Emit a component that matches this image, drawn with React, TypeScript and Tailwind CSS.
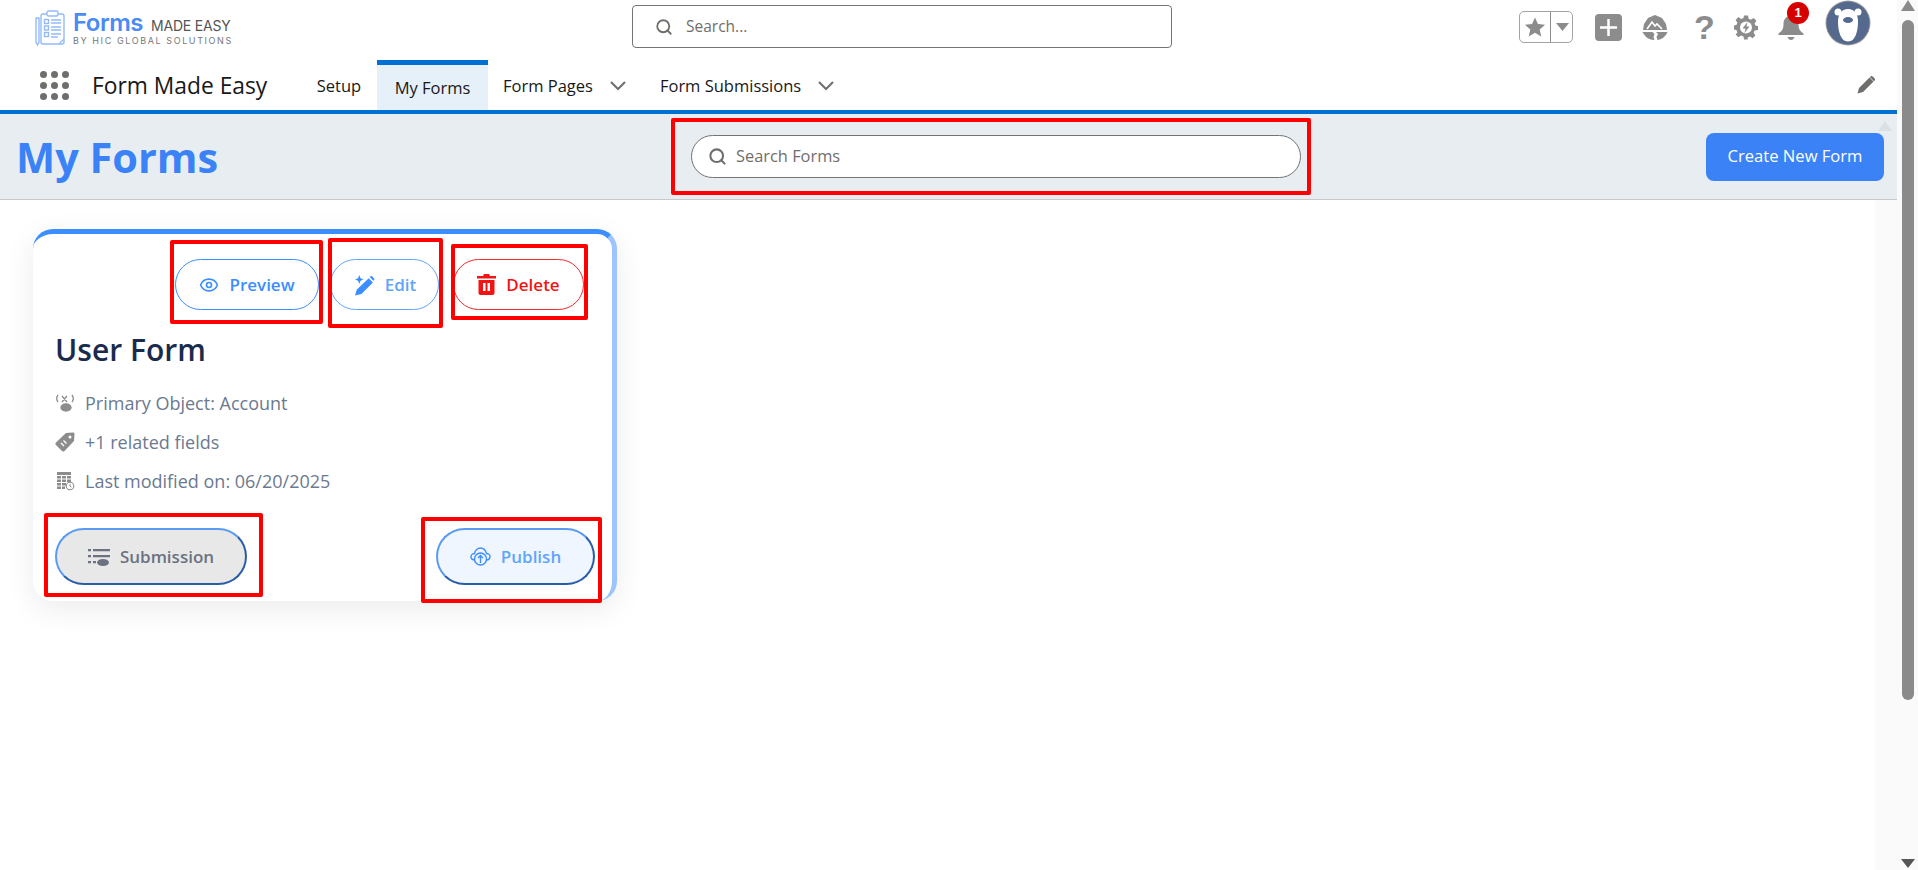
import React from "react";
import { Search, Eye } from "lucide-react";

const FONT = "font-['Open_Sans','Noto_Sans',sans-serif]";

function AppLogo() {
  return (
    <div className="flex items-center ml-[35px] w-[197px] mb-[4px]" data-name="Logo">
      <svg className="shrink-0" width="30" height="37" viewBox="0 0 30 37" fill="none" stroke="#93bbfb" strokeWidth="1.4">
        <rect x="6" y="4" width="23" height="30" rx="2" />
        <rect x="12" y="1" width="11" height="5" rx="1.5" fill="#fff" />
        <path d="M1 8h3v24l-1.500 3L1 32z" />
        <rect x="9.500" y="9.500" width="4" height="4" />
        <rect x="9.500" y="16" width="4" height="4" />
        <rect x="9.500" y="22.500" width="4" height="4" />
        <path d="M16 10h10M16 13h10M16 17h10M16 20h10M16 24h10M16 27h7M24 34l5-5" />
      </svg>
      <div className="ml-[8px] font-['Inter',sans-serif] leading-none">
        <div className="flex items-baseline">
          <span className="text-[24px] font-semibold text-[#4a8bf5] tracking-[-0.5px]">Forms</span>
          <span className="ml-[8px] text-[14px] text-[#555] tracking-[-0.2px] whitespace-nowrap">MADE EASY</span>
        </div>
        <div className="mt-[1px] text-[9px] text-[#777] tracking-[1.6px] whitespace-nowrap">BY HIC GLOBAL SOLUTIONS</div>
      </div>
    </div>
  );
}

function TopIcons() {
  return (
    <div className="flex items-center ml-auto mr-[26px] mb-[6px] text-[#8c8c8c]">
      <div className="flex items-center h-[32px] w-[54px] border border-[#a3a3a3] rounded-[5px]">
        <div className="flex items-center justify-center w-[31px] h-full border-r border-[#8c8c8c]">
          <svg width="22" height="22" viewBox="0 0 24 24" fill="#8c8c8c"><path d="M12 1.500l3.200 7.200 7.800.8-5.900 5.200 1.800 7.700L12 18.400l-6.900 4 1.800-7.700L1 9.500l7.800-.8z" /></svg>
        </div>
        <svg className="ml-[5px]" width="13" height="8" viewBox="0 0 13 8" fill="#8c8c8c"><path d="M0 0h13L6.500 8z" /></svg>
      </div>

      <div className="flex items-center justify-center ml-[22px] w-[27px] h-[27px] rounded-[4px] bg-[#8c8c8c]">
        <svg width="19" height="19" viewBox="0 0 19 19" stroke="#fff" strokeWidth="2.500"><path d="M9.500 1v17M1 9.500h17" /></svg>
      </div>

      {/* trailhead */}
      <svg className="ml-[20px]" width="26" height="25" viewBox="0 0 26 25" fill="#8c8c8c">
        <path d="M13 0l7 3 4 6 1 6H1l1-6 4-6z" />
        <path d="M0.500 17h10l2 2-1 3 1 3C7 25 3 22 .5 17zM14 17h11.500c-2 5-6 7.500-10 8l-1-3 1.500-3z" />
        <path d="M5 14l5-7 3 4 2-2 5 5" fill="none" stroke="#fff" strokeWidth="1.600" />
      </svg>

      <span className="ml-[26px] w-[18px] text-[34px] leading-none font-semibold text-[#8c8c8c] font-['Liberation_Sans',sans-serif]">?</span>

      {/* setup gear with bolt */}
      <svg className="ml-[22px]" width="24" height="25" viewBox="0 0 24 24">
        <path fill="#8c8c8c" d="M10 0h4l.6 3.200 2.300 1 2.700-1.800 2.800 2.800-1.800 2.700 1 2.300L24 10.600v3.800l-3.400.6-1 2.300 1.800 2.700-2.800 2.800-2.700-1.800-2.300 1L13.900 24h-3.800l-.6-3-2.400-1-2.700 1.800-2.800-2.800L3.400 17l-1-2.400L0 14v-4l2.400-.4 1-2.400L1.600 4.400l2.800-2.800 2.700 1.800 2.400-1z" />
        <circle cx="12" cy="12" r="6" fill="#fff" />
        <path fill="#8c8c8c" d="M13.500 6.500L8.500 13h3l-1 4.500 5-6.500h-3z" />
      </svg>

      {/* bell */}
      <div className="relative ml-[20px] w-[26px] h-[25px]">
        <svg width="26" height="25" viewBox="0 0 26 25" fill="#8c8c8c">
          <path d="M13 1c5 0 7.500 3.500 7.500 8 0 5 1.500 7 5 9.500V20H.5v-1.500c3.500-2.500 5-4.500 5-9.500 0-4.500 2.500-8 7.500-8z" />
          <path d="M9.500 22h7c-.5 2-2 3-3.500 3s-3-1-3.500-3z" />
        </svg>
        <span className="absolute left-[9px] top-[-13px] flex items-center justify-center w-[22px] h-[22px] rounded-full bg-[#d60000] text-white text-[13px] font-bold font-['Liberation_Sans',sans-serif]">1</span>
      </div>

      {/* avatar */}
      <svg className="ml-[21px] mb-[8px]" width="46" height="46" viewBox="0 0 46 46">
        <circle cx="23" cy="23" r="22.500" fill="#9b9b9b" />
        <circle cx="23" cy="23" r="21.500" fill="#54698d" />
        <circle cx="13" cy="12" r="3.500" fill="#fff" />
        <circle cx="33" cy="12" r="3.500" fill="#fff" />
        <path d="M23 9c6.500 0 10 5 10 12.500 0 9-2.500 20-10 20s-10-11-10-20C13 14 16.500 9 23 9z" fill="#fff" />
        <ellipse cx="23" cy="20" rx="5" ry="3" fill="#54698d" />
      </svg>
    </div>
  );
}

function HeaderBar() {
  return (
    <div className="flex items-center h-[60px] bg-white shrink-0" data-name="Global header">
      <AppLogo />
      <div className="flex items-center h-[43px] w-[540px] ml-[400px] mb-[7px] px-[22px] border border-[#747474] rounded-[4px] bg-white text-[#706e6b]">
        <Search size={18} strokeWidth={2.4} />
        <span className="ml-[13px] text-[15.500px]">Search...</span>
      </div>
      <TopIcons />
    </div>
  );
}

function NavChevron() {
  return (
    <svg width="16" height="10" viewBox="0 0 16 10" fill="none" stroke="#706e6b" strokeWidth="2">
      <path d="M1 1l7 7 7-7" />
    </svg>
  );
}

function NavBar() {
  return (
    <div className="flex items-center h-[50px] bg-white shrink-0" data-name="Nav">
      <div className="ml-[40px] grid grid-cols-3 gap-[4px] w-[29px]">
        {[...Array(9).keys()].map((i) => (
          <span key={i} className="w-[7px] h-[7px] rounded-full bg-[#706e6b]" />
        ))}
      </div>
      <span className="ml-[23px] mt-[3px] w-[209px] text-[22.800px] text-[#181818] whitespace-nowrap">Form Made Easy</span>
      <span className="w-[76px] mt-[2px] text-center text-[16.500px] text-[#181818]">Setup</span>
      <div className="flex items-center justify-center w-[111px] h-full pt-[1px] bg-[#e6f0f9] border-t-[5px] border-[#0070d2] text-[16.500px] text-[#181818]">My Forms</div>
      <div className="flex items-center ml-[15px] mt-[2px] text-[16.500px] text-[#181818]">
        <span>Form Pages</span>
        <span className="ml-[17px]"><NavChevron /></span>
      </div>
      <div className="flex items-center ml-[34px] mt-[2px] text-[16.500px] text-[#181818]">
        <span>Form Submissions</span>
        <span className="ml-[17px]"><NavChevron /></span>
      </div>
      <svg className="ml-auto mr-[22px]" width="18" height="18" viewBox="0 0 18 18" fill="#706e6b">
        <path d="M12.500 1.500l4 4L6 16l-5.500 1.500L2 12zM13.500.5c.8-.7 1.500-.7 2.200 0l2 2c.6.700.6 1.400 0 2l-.7.700-4-4z" />
      </svg>
    </div>
  );
}

function PageHeader() {
  return (
    <div className="relative flex items-center h-[86px] bg-[#e8edf2] border-b border-[#c9c9c9] shrink-0" data-name="Page header">
      <h1 className="w-[691px] pl-[16px] pt-[2px] text-[41.500px] font-bold leading-none text-[#3b82f6]">My Forms</h1>
      <div className="relative flex items-center h-[43px] w-[610px] px-[16px] rounded-full border border-[#747474] bg-white text-[#706e6b]">
        <Search size={19} strokeWidth={2.6} />
        <span className="ml-[9px] text-[16.400px]">Search Forms</span>
        <span className="absolute left-[-21px] right-[-11px] top-[-18px] bottom-[-18px] border-[4px] border-[#ff0000] rounded-[2px]" />
      </div>
      <button className="ml-auto mr-[13px] w-[178px] h-[48px] rounded-[8px] bg-[#3b82f6] text-white text-[16.600px]">Create New Form</button>
      <svg className="absolute right-[5px] top-[7px]" width="14" height="10" viewBox="0 0 14 10" fill="#dbe0e5"><path d="M7 0l7 10H0z" /></svg>
    </div>
  );
}

function PillButton({
  className,
  icon,
  label,
  box,
}: {
  className: string;
  icon: React.ReactNode;
  label: string;
  box: string;
}) {
  return (
    <div className={`relative flex items-center justify-center gap-[10px] rounded-full font-semibold text-[17px] ${className}`}>
      {icon}
      <span>{label}</span>
      <span className={`absolute border-[4px] border-[#ff0000] rounded-[2px] ${box}`} />
    </div>
  );
}

function FormCard() {
  return (
    <div className="relative w-[584px] h-[372px] ml-[33px] mt-[29px] rounded-[20px] bg-white border-t-[5px] border-r-[5px] border-t-[#3b8eff] border-r-[#9cc4ff] shadow-[0_8px_30px_rgba(0,0,0,0.08)]" data-name="Form card">
      <div className="flex justify-end pt-[25px] pr-[28px]">
        <PillButton
          className="w-[144px] h-[51px] border border-[#3b8eff] text-[#3b8eff]"
          icon={<Eye size={20} strokeWidth={2} />}
          label="Preview"
          box="left-[-6px] right-[-5px] top-[-20px] bottom-[-15px]"
        />
        <PillButton
          className="ml-[11px] w-[109px] h-[51px] border border-[#60a5fa] text-[#60a5fa]"
          icon={
            <svg width="22" height="22" viewBox="0 0 21 21" fill="#3b8eff">
              <path d="M15 4l4 4L8 19l-6 1.500L3.500 15zM16.500 2.500c.7-.7 1.500-.7 2 0l1.500 1.500c.6.600.6 1.300 0 2l-.5.500-4-4zM6 1l1.200 3L10 5.200 7.200 6.500 6 9.500 4.800 6.500 2 5.200 4.800 4z" />
            </svg>
          }
          label="Edit"
          box="left-[-3px] right-[-5px] top-[-22px] bottom-[-19px]"
        />
        <PillButton
          className="ml-[14px] w-[131px] h-[51px] border border-[#ef2b2b] text-[#f01414]"
          icon={
            <svg width="19" height="21" viewBox="0 0 19 21" fill="#f01414">
              <path d="M7 0h5l1 2h6v2.500H0V2h6zM1.500 6h16v13c0 1-1 2-2 2h-12c-1 0-2-1-2-2zM6 9v8h2.500V9zm4.500 0v8H13V9z" fillRule="evenodd" />
            </svg>
          }
          label="Delete"
          box="left-[-3px] right-[-5px] top-[-16px] bottom-[-11px]"
        />
      </div>

      <h2 className="ml-[22px] mt-[21px] text-[30px] font-semibold leading-[38px] text-[#1a2b4c]">User Form</h2>

      <div className="ml-[22px] mt-[22px] flex flex-col gap-[15px] text-[18px] leading-[24px] text-[#6b7a90]">
        <div className="flex items-center gap-[10px]">
          <svg width="20" height="20" viewBox="0 0 20 20" fill="none" stroke="#8c8c8c" strokeWidth="1.300">
            <path d="M3 2C1.500 4 1.500 7 3 9M17 2c1.500 2 1.500 5 0 7M7 3l5 6M12 3l-5 6" />
            <ellipse cx="11" cy="14.500" rx="5" ry="3.500" fill="#8c8c8c" />
          </svg>
          <span>Primary Object: Account</span>
        </div>
        <div className="flex items-center gap-[10px]">
          <svg width="20" height="20" viewBox="0 0 20 20" fill="#8c8c8c">
            <path fillRule="evenodd" d="M11 1l7-.5c1 0 1.500.5 1.500 1.500l-.5 7L9.500 19c-.8.800-1.700.800-2.500 0L1 13c-.8-.8-.8-1.700 0-2.500zM15 3.500a1.500 1.500 0 100 3 1.500 1.500 0 000-3z" />
            <path d="M6 11l3 3M8.500 8.500l3 3" stroke="#fff" strokeWidth="1.400" />
          </svg>
          <span>+1 related fields</span>
        </div>
        <div className="flex items-center gap-[10px]">
          <svg width="20" height="20" viewBox="0 0 20 20" fill="#8c8c8c">
            <path d="M2 1h14v3H2zM2 5h4v2.500H2zM7 5h4v2.500H7zM12 5h4v2.500h-4zM2 8.500h4V11H2zM7 8.500h4V11H7zM12 8.500h4V11h-4zM2 12h4v2.500H2zM7 12h4v2.500H7zM2 15.500h4V18H2zM7 15.500h3V18H7z" />
            <circle cx="15" cy="15" r="3.800" fill="#fff" stroke="#8c8c8c" strokeWidth="1.100" />
            <path d="M15 13v2.200l1.400.9" fill="none" stroke="#8c8c8c" />
          </svg>
          <span>Last modified on: 06/20/2025</span>
        </div>
      </div>

      <div className="flex justify-between pl-[22px] pr-[17px] mt-[35px]">
        <PillButton
          className="w-[192px] h-[57px] border-2 border-t-[#5a9bf0] border-l-[#5a9bf0] border-b-[#2a5da8] border-r-[#2a5da8] bg-[#e8e8e8] text-[#6b7280]"
          icon={
            <svg width="22" height="20" viewBox="0 0 22 20" fill="#6b7280">
              <path d="M0 2h3v2.200H0zM5 2h17v2.200H5zM0 8h3v2.200H0zM5 8h17v2.200H5zM0 14h3v2.200H0zM5 14h3v2.200H5z" />
              <ellipse cx="15" cy="15.500" rx="6" ry="3.500" />
            </svg>
          }
          label="Submission"
          box="left-[-13px] right-[-18px] top-[-17px] bottom-[-14px]"
        />
        <PillButton
          className="w-[159px] h-[57px] border-2 border-t-[#5a9bf0] border-l-[#5a9bf0] border-b-[#2a5da8] border-r-[#2a5da8] bg-[#eff6ff] text-[#60a5fa]"
          icon={
            <svg width="21" height="20" viewBox="0 0 21 20" fill="none" stroke="#3b8eff" strokeWidth="1.400">
              <path d="M5 13C2 13 1 11 1 9.500S2.500 6.500 4.500 6.500C5 3 8 1 10.500 1S15.500 3 16.500 6.500C18.500 6.500 20 8 20 9.500S19 13 16 13" />
              <circle cx="10.500" cy="12" r="6" />
              <path d="M10.500 16v-7M8 11l2.500-2.500L13 11" />
            </svg>
          }
          label="Publish"
          box="left-[-17px] right-[-9px] top-[-13px] bottom-[-20px]"
        />
      </div>
    </div>
  );
}

function PageScrollbar() {
  return (
    <div className="flex flex-col items-center w-[21px] h-full bg-[#fafafa] shrink-0" data-name="Scrollbar">
      <svg width="14" height="11" viewBox="0 0 14 11" fill="#8a8a8a"><path d="M7 0l7 11H0z" /></svg>
      <div className="mt-[9px] w-[12px] h-[680px] rounded-full bg-[#8a8a8a]" />
      <svg className="mt-auto mb-[2px]" width="14" height="9" viewBox="0 0 14 9" fill="#555"><path d="M0 0h14L7 9z" /></svg>
    </div>
  );
}

export default function App() {
  return (
    <div className={`flex w-full h-[870px] overflow-hidden bg-white ${FONT}`}>
      <div className="flex flex-col flex-1 min-w-0">
        <HeaderBar />
        <NavBar />
        <div className="h-[4px] bg-[#0070d2] shrink-0" />
        <PageHeader />
        <div className="flex flex-1 min-h-0">
          <div className="flex-1 min-w-0 overflow-hidden pb-[60px]">
            <FormCard />
          </div>
          <div className="w-[22px] bg-[#fafafa] shrink-0" />
        </div>
      </div>
      <PageScrollbar />
    </div>
  );
}
